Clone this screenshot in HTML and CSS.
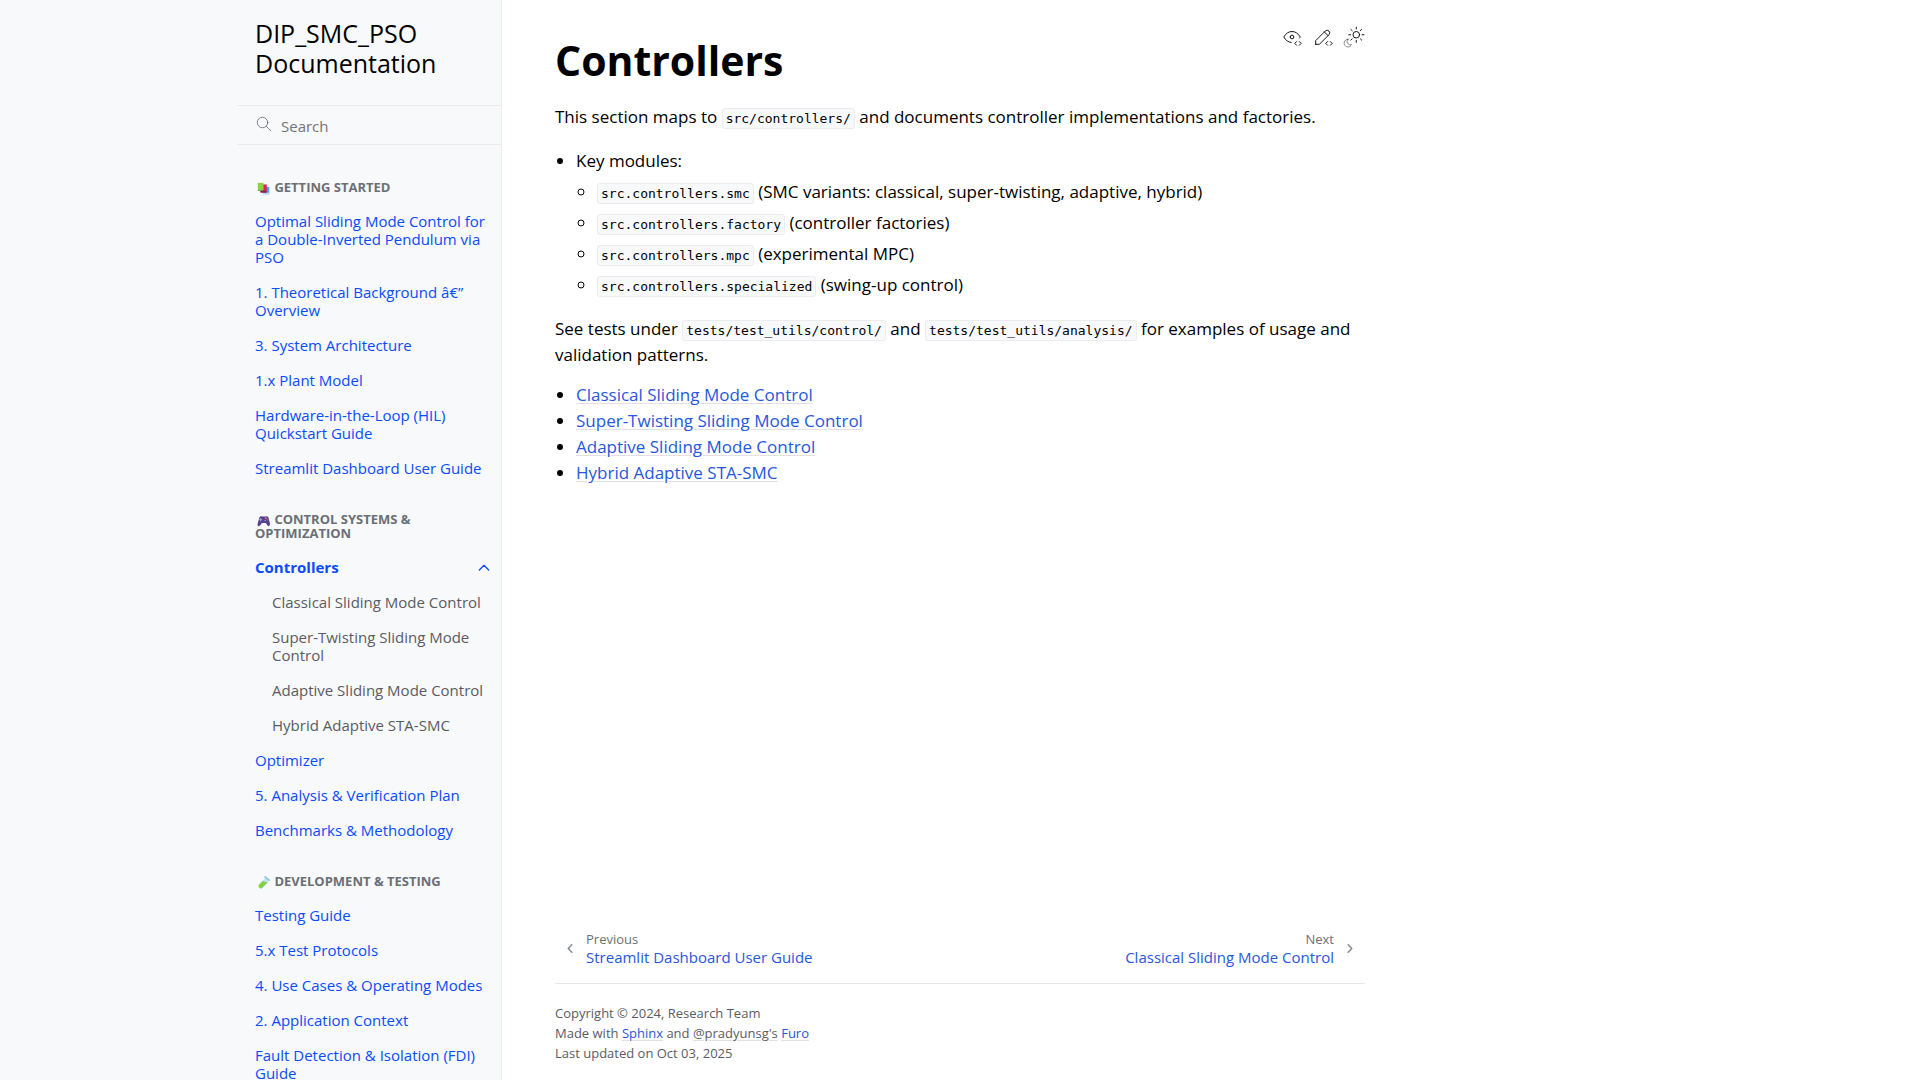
FILE: index.html
```html
<!DOCTYPE html>
<html lang="en">
<head>
<meta charset="utf-8">
<meta name="viewport" content="width=device-width, initial-scale=1">
<title>Controllers - DIP_SMC_PSO Documentation</title>
<link rel="stylesheet" href="styles.css">
</head>
<body>
<div class="page">
  <aside class="sidebar">
    <div class="sidebar-inner">
      <a class="brand" href="#">DIP_SMC_PSO Documentation</a>
      <form class="search" role="search">
        <label for="q" aria-label="Search">
          <svg class="search-icon" viewBox="0 0 24 24"><circle cx="10" cy="10" r="7"/><path d="M21 21l-6-6"/></svg>
        </label>
        <input id="q" type="search" placeholder="Search">
      </form>
      <nav class="tree">
        <p class="caption"><svg class="emoji" viewBox="0 0 16 16"><path fill="#4aa3e0" d="M9 6h6v9H8z"/><path fill="#b9d9f2" d="M7 13h8v2H7z"/><path fill="#d6245c" d="M5 3h7v10H5z"/><path fill="#8a2350" d="M4 11h8v2H4z"/><path fill="#8bd148" d="M1 1h7v9H1z"/><path fill="#5a8f3c" d="M1 10h7v1H1z"/></svg> Getting Started</p>
        <ul>
          <li><a href="#">Optimal Sliding Mode Control for a Double-Inverted Pendulum via PSO</a></li>
          <li><a href="#">1. Theoretical Background â€” Overview</a></li>
          <li><a href="#">3. System Architecture</a></li>
          <li><a href="#">1.x Plant Model</a></li>
          <li><a href="#">Hardware-in-the-Loop (HIL) Quickstart Guide</a></li>
          <li><a href="#">Streamlit Dashboard User Guide</a></li>
        </ul>
        <p class="caption"><svg class="emoji" viewBox="0 0 16 16"><path fill="#5b3d8f" d="M3 4q1-2 4-1h3q3-1 4 1l2 8q0 3-2 3-1 0-3-4H6q-2 4-4 4-2 0-1-4z"/><path stroke="#bfb2d9" d="M3 7h3M4.500 5.500v3"/><circle cx="11" cy="5" r="1" fill="#f2c14e"/><circle cx="13" cy="7" r="1" fill="#e0526f"/><circle cx="10" cy="8" r="1" fill="#4fb6d8"/></svg> Control Systems &amp; Optimization</p>
        <ul>
          <li class="current">
            <div class="row">
              <a href="#">Controllers</a>
              <button class="toggle" type="button" aria-label="Toggle navigation of Controllers"><svg viewBox="0 0 24 24"><path d="M5 15l7-7 7 7"/></svg></button>
            </div>
            <ul>
              <li><a href="#">Classical Sliding Mode Control</a></li>
              <li><a href="#">Super-Twisting Sliding Mode Control</a></li>
              <li><a href="#">Adaptive Sliding Mode Control</a></li>
              <li><a href="#">Hybrid Adaptive STA-SMC</a></li>
            </ul>
          </li>
          <li><a href="#">Optimizer</a></li>
          <li><a href="#">5. Analysis &amp; Verification Plan</a></li>
          <li><a href="#">Benchmarks &amp; Methodology</a></li>
        </ul>
        <p class="caption"><svg class="emoji" viewBox="0 0 16 16"><path fill="#c4e3f5" d="M10 2l5 4-9 9q-3 1-4-2 0-2 1-3z"/><path fill="#7ed348" d="M7 6l6 2-7 7q-3 1-4-2 0-2 1-3z"/><path stroke="#8fc0df" stroke-width="2" d="M10 1l5 4"/></svg> Development &amp; Testing</p>
        <ul>
          <li><a href="#">Testing Guide</a></li>
          <li><a href="#">5.x Test Protocols</a></li>
          <li><a href="#">4. Use Cases &amp; Operating Modes</a></li>
          <li><a href="#">2. Application Context</a></li>
          <li><a href="#">Fault Detection &amp; Isolation (FDI) Guide</a></li>
        </ul>
      </nav>
    </div>
  </aside>

  <main class="main">
    <div class="content">
      <article>
        <div class="actions">
          <a href="#" aria-label="View this page"><svg viewBox="0 0 24 24"><path d="M10 12a2 2 0 1 0 4 0a2 2 0 0 0 -4 0"/><path d="M11.110 17.958c-3.209 -.307 -5.910 -2.293 -8.110 -5.958c2.400 -4 5.400 -6 9 -6c3.600 0 6.600 2 9 6c-.210 .352 -.427 .688 -.647 1.008"/><path d="M20 21l2 -2l-2 -2"/><path d="M17 17l-2 2l2 2"/></svg></a>
          <a href="#" aria-label="Edit this page"><svg viewBox="0 0 24 24"><path d="M4 20h4l10.500 -10.500a2.828 2.828 0 1 0 -4 -4l-10.500 10.500v4"/><path d="M13.500 6.500l4 4"/><path d="M20 21l2 -2l-2 -2"/><path d="M17 17l-2 2l2 2"/></svg></a>
          <button type="button" aria-label="Toggle light, dark or auto theme"><svg viewBox="0 0 24 24"><path opacity=".5" d="M5.411 14.504C5.471 14.504 5.532 14.504 5.591 14.504C3.639 16.319 4.383 19.569 6.931 20.352C7.693 20.586 8.512 20.551 9.250 20.252C8.023 23.207 4.056 23.725 2.110 21.184C.166 18.642 1.702 14.949 4.874 14.536C5.051 14.512 5.231 14.500 5.411 14.500Z"/><path d="M14.500 3.250v-2M14.500 15.850v2M10.044 5.094L8.630 3.680M19 14.050l1.414 1.414M8.200 9.550h-2M20.800 9.550h2M10.044 14.006L8.630 15.420M19 5.050l1.414-1.414"/><circle cx="14.500" cy="9.550" r="3.600"/></svg></button>
        </div>
        <h1>Controllers</h1>
        <p>This section maps to <code>src/controllers/</code> and documents controller implementations and factories.</p>
        <ul class="modules">
          <li>Key modules:
            <ul>
              <li><code>src.controllers.smc</code> (SMC variants: classical, super-twisting, adaptive, hybrid)</li>
              <li><code>src.controllers.factory</code> (controller factories)</li>
              <li><code>src.controllers.mpc</code> (experimental MPC)</li>
              <li><code>src.controllers.specialized</code> (swing-up control)</li>
            </ul>
          </li>
        </ul>
        <p>See tests under <code>tests/test_utils/control/</code> and <code>tests/test_utils/analysis/</code> for examples of usage and validation patterns.</p>
        <ul class="toctree">
          <li><a href="#">Classical Sliding Mode Control</a></li>
          <li><a href="#">Super-Twisting Sliding Mode Control</a></li>
          <li><a href="#">Adaptive Sliding Mode Control</a></li>
          <li><a href="#">Hybrid Adaptive STA-SMC</a></li>
        </ul>
      </article>
      <footer>
        <nav class="related">
          <a class="prev" href="#">
            <svg viewBox="0 0 24 24"><path d="M15 4l-8 8 8 8"/></svg>
            <span class="info"><span class="context">Previous</span><span class="title">Streamlit Dashboard User Guide</span></span>
          </a>
          <a class="next" href="#">
            <span class="info"><span class="context">Next</span><span class="title">Classical Sliding Mode Control</span></span>
            <svg viewBox="0 0 24 24"><path d="M9 4l8 8-8 8"/></svg>
          </a>
        </nav>
        <div class="legal">
          <div>Copyright © 2024, Research Team</div>
          <div>Made with <a href="#">Sphinx</a> and <a class="muted" href="#">@pradyunsg's</a> <a href="#">Furo</a></div>
          <div>Last updated on Oct 03, 2025</div>
        </div>
      </footer>
    </div>
  </main>
</div>
</body>
</html>
```
FILE: styles.css
```css
* {
  box-sizing: border-box;
}

body {
  margin: 0;
  color: #000;
  background: #fff;
  font-family: "Segoe UI", "Open Sans", "Noto Sans", sans-serif;
  font-size: 17px;
  line-height: 26px;
}

a {
  color: #2757dd;
  text-decoration: none;
}

ul {
  margin: 0;
  padding: 0;
}

svg {
  fill: none;
  stroke-linecap: round;
  stroke-linejoin: round;
}

button {
  display: flex;
  padding: 0;
  border: 0;
  background: none;
  color: inherit;
}

.page {
  display: flex;
  min-height: 100vh;
}

/* Sidebar */

.sidebar {
  position: sticky;
  top: 0;
  display: flex;
  justify-content: flex-end;
  width: calc(50% - 458px);
  min-width: 264px;
  height: 100vh;
  overflow: hidden;
  border-right: 1px solid #eeebee;
  background: #f8f9fb;
}

.sidebar-inner {
  width: 264px;
}

.brand {
  display: block;
  padding: 18px 16px 27px 18px;
  color: #000;
  font-size: 25px;
  line-height: 30px;
}

.search {
  display: flex;
  align-items: center;
  height: 40px;
  border-top: 1px solid #eeebee;
  border-bottom: 1px solid #eeebee;
}

.search label {
  display: flex;
  padding: 0 8px 2px 18px;
}

.search-icon {
  width: 18px;
  height: 18px;
  stroke: #5a5c63;
}

.search input {
  flex: 1;
  min-width: 0;
  padding: 2px 0 0;
  border: 0;
  outline: 0;
  background: none;
  font: inherit;
  font-size: 15px;
}

.search input::placeholder {
  color: #757575;
}

.tree {
  padding-top: 35px;
  font-size: 15px;
  line-height: 18px;
}

.tree ul {
  list-style: none;
}

.tree a {
  display: block;
  padding: 8px 16px 9px 18px;
  color: #0a4bff;
}

.tree .row {
  display: flex;
  justify-content: space-between;
}

.tree .row a {
  font-weight: 700;
}

.toggle {
  align-items: center;
  justify-content: center;
  width: 35px;
  color: #0a4bff;
}

.toggle svg {
  width: 16px;
  height: 16px;
  stroke: currentColor;
  stroke-width: 2;
}

.tree .current ul {
  padding-left: 17px;
}

.tree .current ul a {
  padding-right: 8px;
  color: #5a5c63;
}

.caption {
  margin: 0;
  padding: 0 16px 0 18px;
  color: #6b6f76;
  font-size: 13px;
  font-weight: 700;
  line-height: 14px;
  text-transform: uppercase;
}

.caption + ul {
  padding: 10px 0 26px;
}

.caption .emoji {
  width: 13px;
  height: 13px;
  margin: 0 1px -3px 2px;
}

/* Article */

.main {
  flex: 1;
  min-width: 0;
}

.content {
  display: flex;
  flex-direction: column;
  justify-content: space-between;
  max-width: 916px;
  min-height: 100vh;
  padding: 26px 53px 17px;
}

.actions {
  display: flex;
  float: right;
  gap: 9px;
}

.actions a {
  display: flex;
  color: #000;
}

.actions svg {
  width: 22px;
  height: 22px;
  stroke: currentColor;
}

h1 {
  margin: 0;
  padding-top: 6px;
  font-size: 41px;
  line-height: 56px;
}

article p {
  margin: 16px 0 0;
}

code {
  padding: 2px 3px;
  border: 1px solid #eeebee;
  border-radius: 3px;
  background: #f8f9fb;
  font-family: Consolas, "DejaVu Sans Mono", monospace;
  font-size: 13px;
  line-height: 15px;
}

.modules,
.toctree {
  padding-left: 21px;
}

.modules {
  margin: 18px 0;
}

.modules ul {
  padding-left: 21px;
}

.modules ul li {
  margin-top: 5px;
}

.toctree {
  margin-top: 14px;
}

.toctree a,
.legal a {
  text-decoration: underline;
  text-decoration-color: #e3e0e3;
  text-underline-offset: 2px;
}

/* Footer */

.related {
  display: flex;
  justify-content: space-between;
  padding-bottom: 17px;
  border-bottom: 1px solid #e8e6e8;
}

.related a {
  display: flex;
  align-items: center;
  gap: 10px;
  padding: 0 10px;
}

.related svg {
  width: 11px;
  height: 11px;
  stroke: #81868d;
  stroke-width: 3;
}

.info {
  display: flex;
  flex-direction: column;
}

.next .info {
  align-items: flex-end;
}

.context {
  color: #6b6f76;
  font-size: 13px;
  line-height: 18px;
}

.title {
  font-size: 15px;
  line-height: 18px;
}

.legal {
  padding-top: 19px;
  color: #5a5c63;
  font-size: 13px;
  line-height: 20px;
}

.legal .muted {
  color: inherit;
}
```
